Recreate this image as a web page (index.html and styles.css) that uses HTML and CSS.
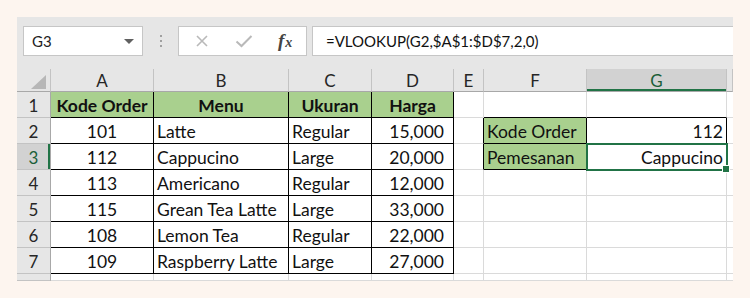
FILE: index.html
```html
<!DOCTYPE html>
<html lang="id">
<head>
    <meta charset="UTF-8">
    <title>VLOOKUP</title>
    <link rel="stylesheet" href="styles.css">
</head>
<body>

    <div class="excel">

        <!-- formula bar -->
        <div class="formula-bar">
            <div class="name-box"><span>G3</span><span class="drop"></span></div>
            <div class="dots"><span></span><span></span><span></span></div>
            <div class="fx-buttons">
                <span class="btn">
                    <svg width="14" height="14" viewBox="0 0 14 14"><path d="M2 2 L12 12 M12 2 L2 12" stroke="#b9b9b9" stroke-width="1.6" fill="none"/></svg>
                </span>
                <span class="btn">
                    <svg width="18" height="14" viewBox="0 0 18 14"><path d="M1.5 7.5 L6.5 12 L16.5 2" stroke="#b9b9b9" stroke-width="2" fill="none"/></svg>
                </span>
                <span class="btn fx"><span><i>f</i><i class="x">x</i></span></span>
            </div>
            <div class="formula">=VLOOKUP(G2,$A$1:$D$7,2,0)</div>
        </div>

        <!-- lembar kerja -->
        <div class="sheet">
            <!-- header kolom -->
            <div class="c h corner"><span></span></div>
            <div class="c h">A</div>
            <div class="c h">B</div>
            <div class="c h">C</div>
            <div class="c h">D</div>
            <div class="c h">E</div>
            <div class="c h">F</div>
            <div class="c h h-sel">G</div>
            <div class="c h"></div>

            <!-- baris 1 -->
            <div class="c r">1</div>
            <div class="c t g ctr">Kode Order</div>
            <div class="c t g ctr">Menu</div>
            <div class="c t g ctr">Ukuran</div>
            <div class="c t g ctr">Harga</div>
            <div class="c"></div>
            <div class="c bb"></div>
            <div class="c bb"></div>
            <div class="c"></div>

            <!-- baris 2 -->
            <div class="c r">2</div>
            <div class="c t ctr">101</div>
            <div class="c t">Latte</div>
            <div class="c t">Regular</div>
            <div class="c t num">15,000</div>
            <div class="c br"></div>
            <div class="c t lbl">Kode Order</div>
            <div class="c t rt">112</div>
            <div class="c"></div>

            <!-- baris 3 -->
            <div class="c r r-sel">3</div>
            <div class="c t ctr">112</div>
            <div class="c t">Cappucino</div>
            <div class="c t">Large</div>
            <div class="c t num">20,000</div>
            <div class="c br"></div>
            <div class="c t lbl">Pemesanan</div>
            <div class="c t rt sel">Cappucino</div>
            <div class="c"></div>

            <!-- baris 4 -->
            <div class="c r">4</div>
            <div class="c t ctr">113</div>
            <div class="c t">Americano</div>
            <div class="c t">Regular</div>
            <div class="c t num">12,000</div>
            <div class="c"></div>
            <div class="c"></div>
            <div class="c"></div>
            <div class="c"></div>

            <!-- baris 5 -->
            <div class="c r">5</div>
            <div class="c t ctr">115</div>
            <div class="c t">Grean Tea Latte</div>
            <div class="c t">Large</div>
            <div class="c t num">33,000</div>
            <div class="c"></div>
            <div class="c"></div>
            <div class="c"></div>
            <div class="c"></div>

            <!-- baris 6 -->
            <div class="c r">6</div>
            <div class="c t ctr">108</div>
            <div class="c t">Lemon Tea</div>
            <div class="c t">Regular</div>
            <div class="c t num">22,000</div>
            <div class="c"></div>
            <div class="c"></div>
            <div class="c"></div>
            <div class="c"></div>

            <!-- baris 7 -->
            <div class="c r">7</div>
            <div class="c t ctr">109</div>
            <div class="c t">Raspberry Latte</div>
            <div class="c t">Large</div>
            <div class="c t num">27,000</div>
            <div class="c"></div>
            <div class="c"></div>
            <div class="c"></div>
            <div class="c"></div>

            <!-- baris 8 (terpotong) -->
            <div class="c r"></div>
            <div class="c"></div>
            <div class="c"></div>
            <div class="c"></div>
            <div class="c"></div>
            <div class="c"></div>
            <div class="c"></div>
            <div class="c"></div>
            <div class="c"></div>
        </div>

    </div>

</body>
</html>
```

FILE: styles.css
```css
* {
    margin: 0;
    padding: 0;
    box-sizing: border-box;
}

body {
    background-color: #fdf5ef;
    font-family: Lato, "Liberation Sans", sans-serif;
    color: #111;
}

.excel {
    width: 716px;
    height: 264px;
    margin: 17px;
    background-color: #e6e6e6;
    overflow: hidden;
}

/* formula bar */
.formula-bar {
    display: flex;
    height: 52px;
    padding: 9px 0 0 6px;
}

.name-box {
    width: 120px;
    height: 30px;
    display: flex;
    align-items: center;
    justify-content: space-between;
    padding: 0 8px 0 8px;
    background-color: #fff;
    border: 1px solid #c6c6c6;
    font-size: 15px;
    color: #222;
}

.drop {
    border-left: 5px solid transparent;
    border-right: 5px solid transparent;
    border-top: 5px solid #606060;
}

.dots {
    width: 35px;
    height: 30px;
    display: flex;
    flex-direction: column;
    align-items: center;
    justify-content: center;
    gap: 3px;
}

.dots span {
    width: 2px;
    height: 2px;
    background-color: #a0a0a0;
}

.fx-buttons {
    width: 129px;
    height: 30px;
    display: flex;
    align-items: center;
    padding-left: 2px;
    background-color: #fff;
    border: 1px solid #c6c6c6;
}

.btn {
    width: 42px;
    display: flex;
    justify-content: center;
    align-items: center;
}

.fx {
    font-family: "Liberation Serif", serif;
    font-size: 19px;
    font-weight: bold;
    color: #444;
}

.fx .x {
    font-size: 14px;
    margin-left: 1px;
}

.formula {
    flex: 1;
    height: 30px;
    margin-left: 5px;
    padding-left: 13px;
    display: flex;
    align-items: center;
    background-color: #fff;
    border: 1px solid #c6c6c6;
    border-right: none;
    font-size: 15px;
    color: #111;
}

/* sheet grid */
.sheet {
    display: grid;
    grid-template-columns: 34px 103px 135px 83px 82px 30px 103px 140px 6px;
    grid-template-rows: 23px repeat(7, 26px) 7px;
}

.c {
    display: flex;
    align-items: center;
    padding: 2px 3px 0 3px;
    background-color: #fff;
    border-right: 1px solid #dadada;
    border-bottom: 1px solid #dadada;
    font-size: 17.5px;
    white-space: nowrap;
    overflow: hidden;
}

.h {
    justify-content: center;
    padding: 1px 0 0 0;
    background-color: #e6e6e6;
    border-right: 1px solid #c3c3c3;
    border-bottom: 1px solid #a8a8a8;
    font-size: 17px;
    color: #262626;
}

.corner {
    justify-content: flex-end;
    align-items: flex-end;
    padding: 0 4px 2px 0;
}

.corner span {
    border-left: 15px solid transparent;
    border-bottom: 14px solid #b7b7b7;
}

.h-sel {
    background-color: #d2d2d2;
    box-shadow: inset 0 -2px #217346;
    color: #1b5e38;
}

.r {
    justify-content: center;
    padding: 2px 0 0 0;
    background-color: #e6e6e6;
    border-right: 1px solid #a8a8a8;
    border-bottom: 1px solid #c3c3c3;
    font-size: 17px;
    color: #262626;
}

.r-sel {
    background-color: #d2d2d2;
    box-shadow: inset -2px 0 #217346;
    color: #1b5e38;
}

/* data table */
.t {
    border-right: 1px solid #000;
    border-bottom: 1px solid #000;
}

.g {
    background-color: #a9d08e;
    font-weight: bold;
}

.lbl {
    background-color: #a9d08e;
}

.ctr {
    justify-content: center;
}

.rt {
    justify-content: flex-end;
}

.num {
    justify-content: flex-end;
    padding-right: 9px;
}

.br {
    border-right: 1px solid #000;
}

.bb {
    border-bottom: 1px solid #000;
}

/* active cell */
.sel {
    position: relative;
    z-index: 1;
    overflow: visible;
    outline: 2px solid #217346;
    outline-offset: -1px;
}

.sel::after {
    content: "";
    position: absolute;
    right: -4px;
    bottom: -4px;
    width: 6px;
    height: 6px;
    background-color: #217346;
    border: 1px solid #fff;
}
```
